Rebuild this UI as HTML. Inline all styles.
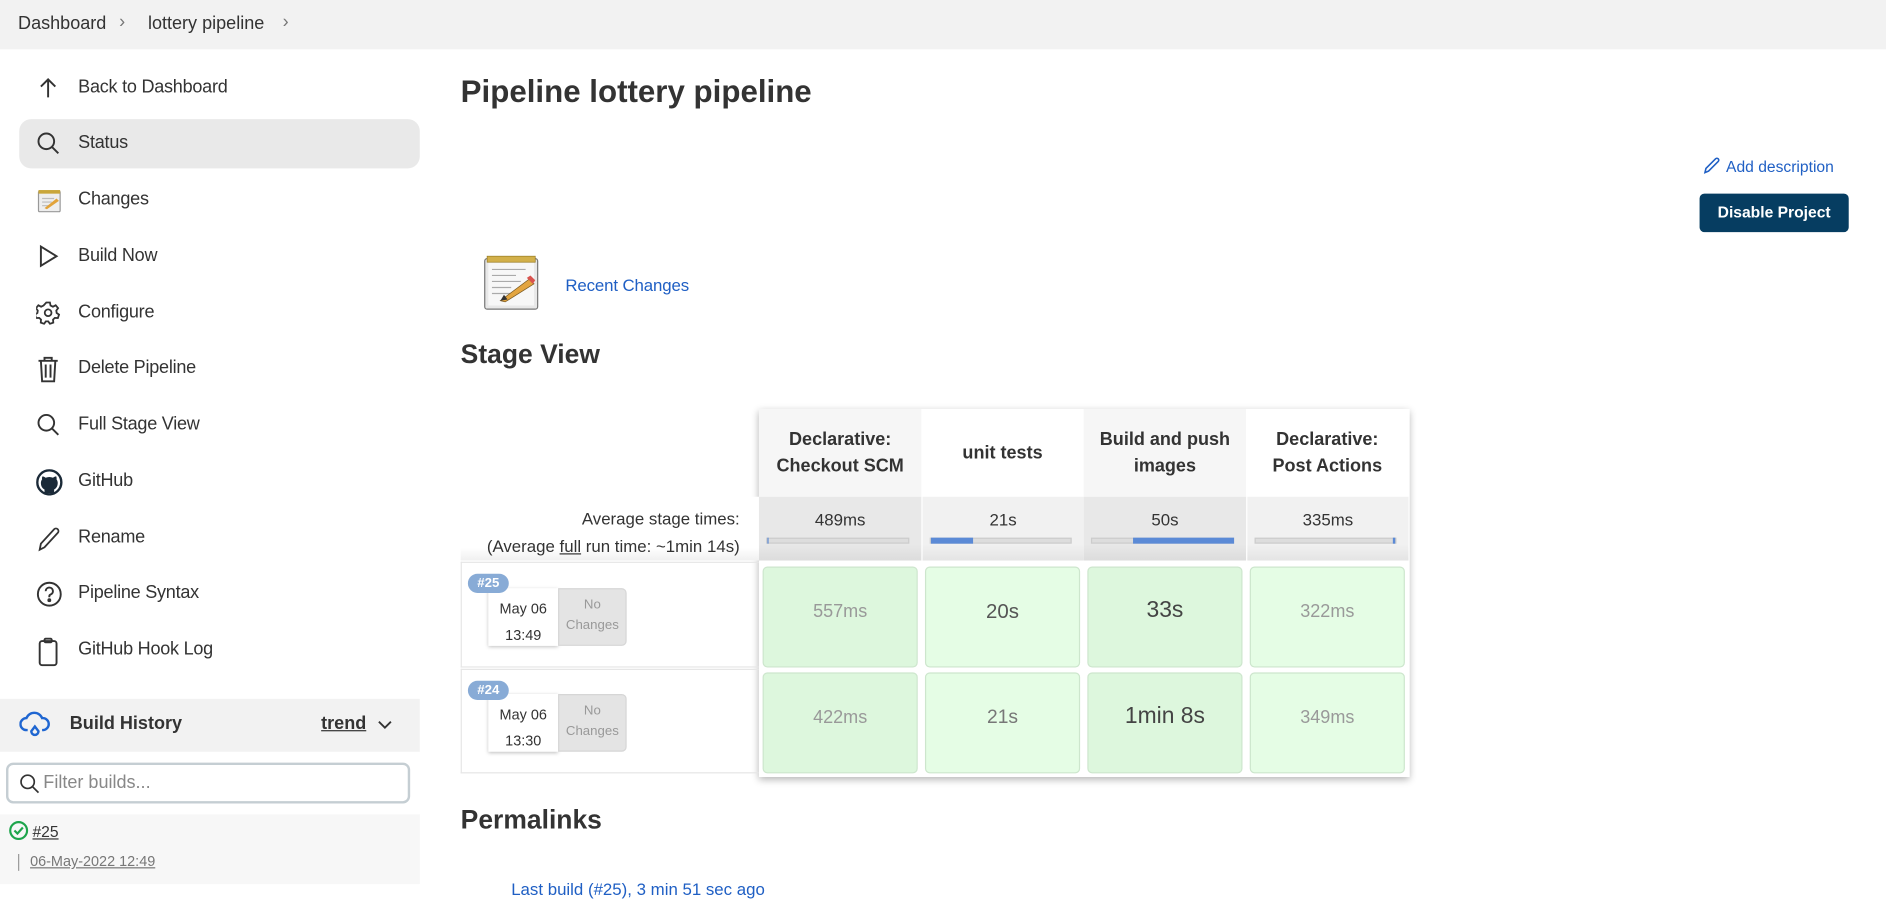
<!DOCTYPE html>
<html><head><meta charset="utf-8"><style>
*{box-sizing:border-box;margin:0;padding:0}
html,body{width:1886px;height:884px;overflow:hidden;background:#fff}
#w{position:absolute;left:0;top:0;width:1568px;height:735px;transform:scale(1.20281);transform-origin:0 0;font-family:"Liberation Sans",sans-serif;color:#333}
.a{position:absolute;white-space:nowrap}
.si{position:absolute;left:0;width:349px;height:40px}
.si svg{position:absolute;left:30px;top:10px}
.si span{position:absolute;left:65px;top:11px;font-size:15px;color:#333;letter-spacing:-.2px}
.hd{position:absolute;top:340px;height:73px;width:135px;font-weight:bold;font-size:15px;text-align:center;display:flex;align-items:center;justify-content:center;line-height:22px;color:#333}
.av{position:absolute;top:413px;height:53px;width:135px;text-align:center;font-size:14px;padding-top:11px;color:#333}
.bar{position:absolute;left:6px;right:10px;top:34px;height:5px;background:#ddd;border:1px solid #ccc}
.bar i{position:absolute;top:-1px;height:5px;background:#5b8ad6}
.c{position:absolute;width:129px;border:1px solid #cde6cd;border-radius:4px;text-align:center;padding-top:28px;color:#999;font-size:15px}
</style></head><body><div id="w">
<div class="a" style="left:0;top:0;width:1568px;height:41px;background:#f2f2f2"></div>
<div class="a" style="left:15px;top:11px;font-size:15px">Dashboard</div>
<div class="a" style="left:99px;top:10px;font-size:15px;color:#777">›</div>
<div class="a" style="left:123px;top:11px;font-size:15px">lottery pipeline</div>
<div class="a" style="left:235px;top:10px;font-size:15px;color:#777">›</div>

<div class="a" style="left:16px;top:99px;width:333px;height:41px;border-radius:10px;background:#e9e9e9"></div>
<div class="si" style="top:53px"><svg width="20" height="20" viewBox="0 0 20 20" fill="none" stroke="#333" stroke-width="1.6"><path d="M10 18V3M4 9l6-6 6 6"/></svg><span>Back to Dashboard</span></div>
<div class="si" style="top:99px"><svg width="20" height="20" viewBox="0 0 20 20" fill="none" stroke="#333" stroke-width="1.6"><circle cx="8.5" cy="8.5" r="6.5"/><path d="M13.5 13.5l5 5"/></svg><span>Status</span></div>
<div class="si" style="top:146px"><svg width="22" height="22" viewBox="0 0 22 22"><rect x="2" y="3" width="18" height="17" rx="1" fill="#eee" stroke="#999"/><rect x="2" y="2" width="18" height="3" fill="#c9a63a"/><path d="M5 9h10M5 12h8M5 15h6" stroke="#bbb"/><path d="M7 17l10-8 2 2-10 7z" fill="#e2a33a"/></svg><span>Changes</span></div>
<div class="si" style="top:193px"><svg width="20" height="20" viewBox="0 0 20 20" fill="none" stroke="#333" stroke-width="1.6"><path d="M4 2l13 8-13 8z"/></svg><span>Build Now</span></div>
<div class="si" style="top:240px"><svg width="20" height="20" viewBox="0 0 20 20" fill="none" stroke="#333" stroke-width="1.5"><path d="M8.5 1.5h3l.5 2.5 2 1 2.3-1.2 2 2.4-1.5 2 .3 2 2 1.4-1 2.8-2.5-.1-1.5 1.4.2 2.5-2.8 1-1.4-2h-2l-1.4 2-2.8-1 .2-2.5-1.5-1.4-2.5.1-1-2.8 2-1.4.3-2-1.5-2 2-2.4 2.3 1.2 2-1z"/><circle cx="10" cy="10" r="2.8"/></svg><span>Configure</span></div>
<div class="si" style="top:286px"><svg width="20" height="22" viewBox="0 0 20 22" fill="none" stroke="#333" stroke-width="1.6"><path d="M2 4h16M7 4V1.5h6V4M4 4l1 17h10l1-17M8 7v11M12 7v11"/></svg><span>Delete Pipeline</span></div>
<div class="si" style="top:333px"><svg width="20" height="20" viewBox="0 0 20 20" fill="none" stroke="#333" stroke-width="1.6"><circle cx="8.5" cy="8.5" r="6.5"/><path d="M13.5 13.5l5 5"/></svg><span>Full Stage View</span></div>
<div class="si" style="top:380px"><svg width="22" height="22" viewBox="0 0 22 22"><circle cx="11" cy="11" r="10" fill="none" stroke="#1b2a38" stroke-width="2"/><path d="M7 20v-3c-2-1-3-3-3-5.5 0-1.2.4-2.2 1-3-.2-.8-.1-1.8.3-2.5 1 0 2 .6 2.6 1.2a8 8 0 0 1 6.2 0c.6-.6 1.6-1.2 2.6-1.2.4.7.5 1.7.3 2.5.6.8 1 1.8 1 3 0 2.5-1 4.5-3 5.5v3z" fill="#1b2a38"/></svg><span>GitHub</span></div>
<div class="si" style="top:427px"><svg width="20" height="22" viewBox="0 0 20 22" fill="none" stroke="#333" stroke-width="1.5"><path d="M3 20l1-5L15 3a2 2 0 0 1 3 3L7 18z"/></svg><span>Rename</span></div>
<div class="si" style="top:473px"><svg width="22" height="22" viewBox="0 0 22 22" fill="none" stroke="#333" stroke-width="1.6"><circle cx="11" cy="11" r="9.5"/><path d="M8 8.5a3 3 0 1 1 4 2.8c-.7.3-1 .8-1 1.5v.7"/><circle cx="11" cy="16" r=".8" fill="#333"/></svg><span>Pipeline Syntax</span></div>
<div class="si" style="top:520px"><svg width="20" height="24" viewBox="0 0 20 24" fill="none" stroke="#333" stroke-width="1.6"><rect x="3" y="3" width="14" height="20" rx="2"/><rect x="7" y="1" width="6" height="3" rx="1"/></svg><span>GitHub Hook Log</span></div>

<div class="a" style="left:0;top:581px;width:349px;height:44px;background:#f2f2f2"></div>
<svg class="a" style="left:16px;top:590px" width="26" height="26" viewBox="0 0 26 26" fill="none" stroke="#1f66d1" stroke-width="2"><path d="M7 17H6a5 5 0 0 1 0-10 7 7 0 0 1 13 0 5 5 0 0 1 1 10h-1"/><path d="M13 14l-3 4a3 3 0 1 0 6 0z"/></svg>
<div class="a" style="left:58px;top:593px;font-size:15px;font-weight:bold">Build History</div>
<div class="a" style="left:267px;top:593px;font-size:15px;font-weight:bold;text-decoration:underline">trend</div>
<svg class="a" style="left:314px;top:597px" width="12" height="10" viewBox="0 0 12 10" fill="none" stroke="#333" stroke-width="1.5"><path d="M1 3l5 5 5-5"/></svg>
<div class="a" style="left:5px;top:634px;width:336px;height:34px;border:2px solid #c5ced3;border-radius:6px;background:#fff"></div>
<svg class="a" style="left:16px;top:643px" width="17" height="17" viewBox="0 0 17 17" fill="none" stroke="#333" stroke-width="1.4"><circle cx="7" cy="7" r="5.5"/><path d="M11 11l5 5"/></svg>
<div class="a" style="left:36px;top:642px;font-size:15px;color:#888">Filter builds...</div>
<div class="a" style="left:0;top:677px;width:349px;height:58px;background:#f7f7f7"></div>
<svg class="a" style="left:7px;top:682px" width="17" height="17" viewBox="0 0 17 17" fill="none" stroke="#1ea54c" stroke-width="1.8"><circle cx="8.5" cy="8.5" r="7"/><path d="M5 8.5l2.5 2.5 4.5-5"/></svg>
<div class="a" style="left:27px;top:684px;font-size:13px;text-decoration:underline">#25</div>
<div class="a" style="left:15px;top:710px;width:1px;height:14px;background:#999"></div>
<div class="a" style="left:25px;top:709px;font-size:12px;color:#777;text-decoration:underline">06-May-2022 12:49</div>

<div class="a" style="left:383px;top:61px;font-size:26px;font-weight:bold">Pipeline lottery pipeline</div>
<svg class="a" style="left:1416px;top:130px" width="15" height="15" viewBox="0 0 15 15" fill="none" stroke="#1f5fc4" stroke-width="1.3"><path d="M1.5 13.5l.8-3.5 8-8a1.5 1.5 0 0 1 2.2 2.2l-8 8z"/></svg>
<div class="a" style="left:1435px;top:131px;font-size:13px;color:#1f5fc4">Add description</div>
<div class="a" style="left:1413px;top:161px;width:124px;height:32px;background:#063d61;border-radius:4px;color:#fff;font-size:13px;font-weight:bold;text-align:center;line-height:32px">Disable Project</div>

<svg class="a" style="left:400px;top:210px" width="50" height="50" viewBox="0 0 50 50"><rect x="3" y="5" width="44" height="42" rx="2" fill="#e8e8e8" stroke="#777"/><rect x="6" y="8" width="38" height="36" fill="#f7f7f7"/><rect x="5" y="3" width="40" height="5" fill="#d2b04a" stroke="#9a7d25" stroke-width=".6"/><path d="M9 14h28M9 19h20M9 24h24M9 29h16M9 34h20" stroke="#aaa"/><path d="M16 40l24-18 4 4-24 15z" fill="#e3a540" stroke="#7a5a22" stroke-width=".6"/><path d="M38 21l3-2 4 4-2 3z" fill="#d9534f"/><path d="M16 40l3-5 3 4z" fill="#333"/></svg>
<div class="a" style="left:470px;top:229px;font-size:14px;color:#1f5fc4;letter-spacing:-.1px">Recent Changes</div>

<div class="a" style="left:383px;top:282px;font-size:22px;font-weight:bold">Stage View</div>

<div class="a" style="left:631px;top:340px;width:541px;height:306px;box-shadow:0 2px 6px rgba(0,0,0,.3);background:#fff"></div>
<div class="hd" style="left:631px;background:#f6f6f6">Declarative:<br>Checkout SCM</div>
<div class="hd" style="left:766px;background:#fff">unit tests</div>
<div class="hd" style="left:901px;background:#f6f6f6">Build and push<br>images</div>
<div class="hd" style="left:1036px;background:#fff">Declarative:<br>Post Actions</div>
<div class="av" style="left:631px;background:linear-gradient(#e8e8e8,#e8e8e8 75%,#dcdcdc)">489ms<div class="bar"><i style="left:0;width:1px"></i></div></div>
<div class="av" style="left:767px;width:134px;background:linear-gradient(#f1f1f1,#f1f1f1 75%,#e4e4e4)">21s<div class="bar"><i style="left:0;width:35px"></i></div></div>
<div class="av" style="left:901px;background:linear-gradient(#e8e8e8,#e8e8e8 75%,#dcdcdc)">50s<div class="bar"><i style="left:34px;width:84px"></i></div></div>
<div class="av" style="left:1037px;width:134px;background:linear-gradient(#f1f1f1,#f1f1f1 75%,#e4e4e4)">335ms<div class="bar"><i style="right:0;width:2px"></i></div></div>

<div class="a" style="left:383px;top:413px;width:248px;height:53px;background:linear-gradient(#fff,#fff 80%,#f0f0f0)"></div>
<div class="a" style="left:383px;top:423px;width:232px;text-align:right;font-size:14px">Average stage times:</div>
<div class="a" style="left:383px;top:446px;width:232px;text-align:right;font-size:14px">(Average <u>full</u> run time: ~1min 14s)</div>

<div class="a" style="left:383px;top:467px;width:248px;height:88px;border:1px solid #e6e6e6;border-right:none"></div>
<div class="a" style="left:383px;top:556px;width:248px;height:87px;border:1px solid #e6e6e6;border-right:none"></div>

<div class="a" style="left:389px;top:477px;width:34px;height:16px;border-radius:8px;background:#88abd6;color:#fff;font-size:11px;font-weight:bold;text-align:center;line-height:16px;z-index:2">#25</div>
<div class="a" style="left:406px;top:489px;width:58px;height:48px;background:#fff;box-shadow:0 1px 3px rgba(0,0,0,.25);font-size:12px;text-align:center;padding-top:6px;line-height:22px">May 06<br>13:49</div>
<div class="a" style="left:464px;top:489px;width:57px;height:48px;background:#e4e4e4;border:1px solid #d6d6d6;border-radius:0 4px 4px 0;font-size:11px;color:#999;text-align:center;padding-top:5px;line-height:17px">No<br>Changes</div>
<div class="a" style="left:389px;top:566px;width:34px;height:16px;border-radius:8px;background:#88abd6;color:#fff;font-size:11px;font-weight:bold;text-align:center;line-height:16px;z-index:2">#24</div>
<div class="a" style="left:406px;top:577px;width:58px;height:48px;background:#fff;box-shadow:0 1px 3px rgba(0,0,0,.25);font-size:12px;text-align:center;padding-top:6px;line-height:22px">May 06<br>13:30</div>
<div class="a" style="left:464px;top:577px;width:57px;height:48px;background:#e4e4e4;border:1px solid #d6d6d6;border-radius:0 4px 4px 0;font-size:11px;color:#999;text-align:center;padding-top:5px;line-height:17px">No<br>Changes</div>

<div class="c" style="left:634px;top:471px;height:84px;background:#ddf7dd">557ms</div>
<div class="c" style="left:769px;top:471px;height:84px;background:#e5fde5;color:#555;font-size:17px;padding-top:27px">20s</div>
<div class="c" style="left:904px;top:471px;height:84px;background:#ddf7dd;color:#444;font-size:19px;padding-top:25px">33s</div>
<div class="c" style="left:1039px;top:471px;height:84px;background:#e5fde5">322ms</div>
<div class="c" style="left:634px;top:559px;height:84px;background:#ddf7dd">422ms</div>
<div class="c" style="left:769px;top:559px;height:84px;background:#e5fde5;color:#777;font-size:16px">21s</div>
<div class="c" style="left:904px;top:559px;height:84px;background:#ddf7dd;color:#444;font-size:19px;padding-top:25px">1min 8s</div>
<div class="c" style="left:1039px;top:559px;height:84px;background:#e5fde5">349ms</div>

<div class="a" style="left:383px;top:669px;font-size:22px;font-weight:bold">Permalinks</div>
<div class="a" style="left:425px;top:731px;font-size:14px;color:#1f5fc4">Last build (#25), 3 min 51 sec ago</div>
</div></body></html>
